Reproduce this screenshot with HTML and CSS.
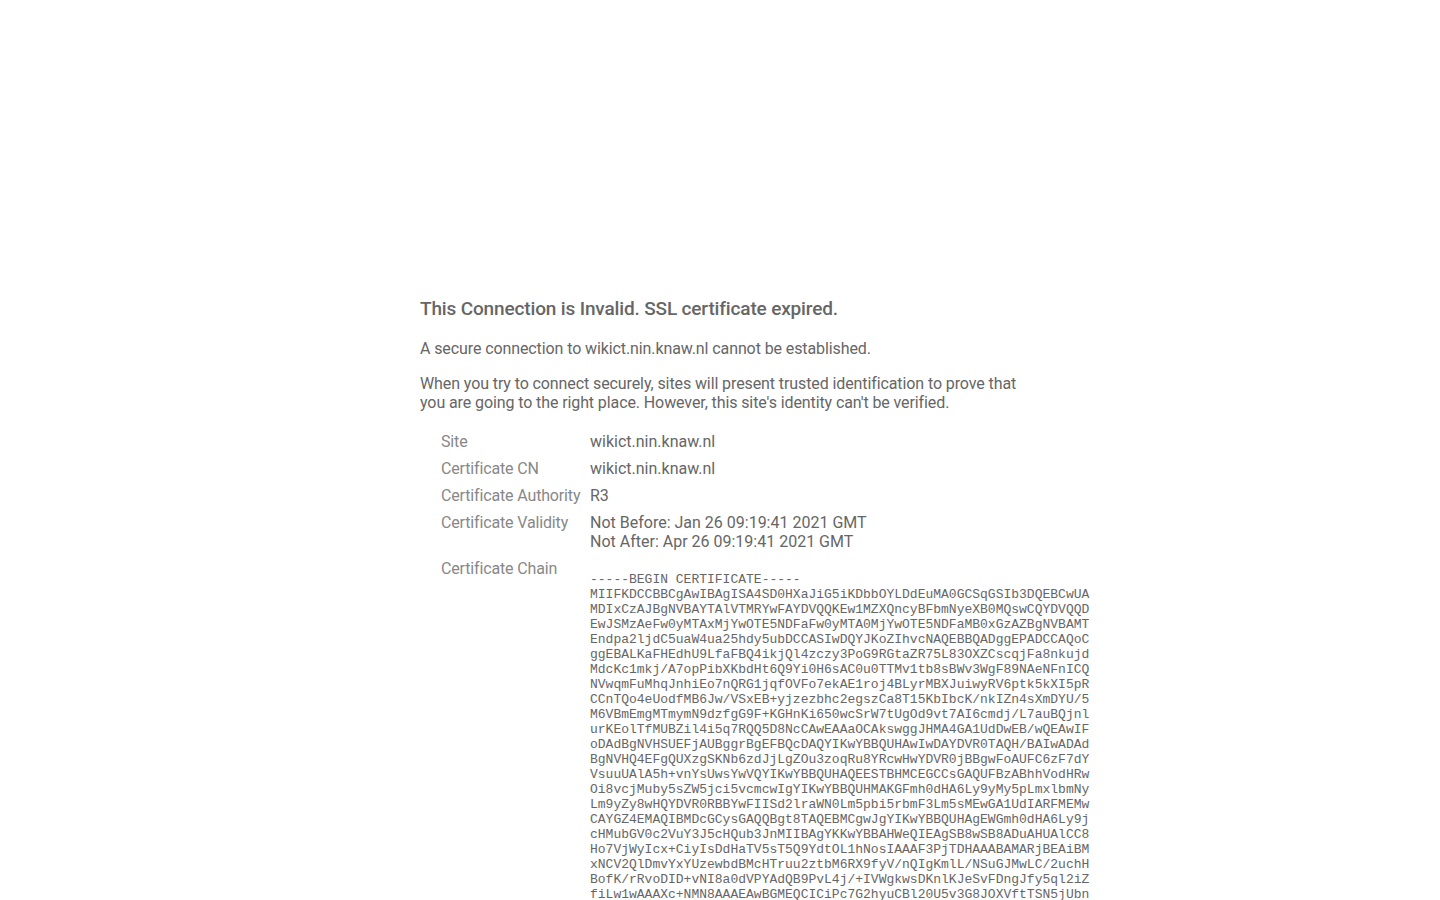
FILE: index.html
```html
<!DOCTYPE html>
<html lang="en">
<head>
<meta charset="utf-8">
<title>SSL certificate expired</title>
<link rel="stylesheet" href="styles.css">
</head>
<body>
<main class="page">
  <h1 class="title">This Connection is Invalid. SSL certificate expired.</h1>
  <p class="lead">A secure connection to wikict.nin.knaw.nl cannot be established.</p>
  <p class="text">When you try to connect securely, sites will present trusted identification to prove that you are going to the right place. However, this site's identity can't be verified.</p>
  <div class="info">
    <div class="label">Site</div>
    <div class="value">wikict.nin.knaw.nl</div>
    <div class="label">Certificate CN</div>
    <div class="value">wikict.nin.knaw.nl</div>
    <div class="label">Certificate Authority</div>
    <div class="value">R3</div>
    <div class="label">Certificate Validity</div>
    <div class="value">Not Before: Jan 26 09:19:41 2021 GMT<br>Not After: Apr 26 09:19:41 2021 GMT</div>
    <div class="label">Certificate Chain</div>
    <div class="value"><pre class="chain">-----BEGIN CERTIFICATE-----
MIIFKDCCBBCgAwIBAgISA4SD0HXaJiG5iKDbbOYLDdEuMA0GCSqGSIb3DQEBCwUA
MDIxCzAJBgNVBAYTAlVTMRYwFAYDVQQKEw1MZXQncyBFbmNyeXB0MQswCQYDVQQD
EwJSMzAeFw0yMTAxMjYwOTE5NDFaFw0yMTA0MjYwOTE5NDFaMB0xGzAZBgNVBAMT
Endpa2ljdC5uaW4ua25hdy5ubDCCASIwDQYJKoZIhvcNAQEBBQADggEPADCCAQoC
ggEBALKaFHEdhU9LfaFBQ4ikjQl4zczy3PoG9RGtaZR75L83OXZCscqjFa8nkujd
MdcKc1mkj/A7opPibXKbdHt6Q9Yi0H6sAC0u0TTMv1tb8sBWv3WgF89NAeNFnICQ
NVwqmFuMhqJnhiEo7nQRG1jqfOVFo7ekAE1roj4BLyrMBXJuiwyRV6ptk5kXI5pR
CCnTQo4eUodfMB6Jw/VSxEB+yjzezbhc2egszCa8T15KbIbcK/nkIZn4sXmDYU/5
M6VBmEmgMTmymN9dzfgG9F+KGHnKi650wcSrW7tUgOd9vt7AI6cmdj/L7auBQjnl
urKEolTfMUBZil4i5q7RQQ5D8NcCAwEAAaOCAkswggJHMA4GA1UdDwEB/wQEAwIF
oDAdBgNVHSUEFjAUBggrBgEFBQcDAQYIKwYBBQUHAwIwDAYDVR0TAQH/BAIwADAd
BgNVHQ4EFgQUXzgSKNb6zdJjLgZOu3zoqRu8YRcwHwYDVR0jBBgwFoAUFC6zF7dY
VsuuUAlA5h+vnYsUwsYwVQYIKwYBBQUHAQEESTBHMCEGCCsGAQUFBzABhhVodHRw
Oi8vcjMuby5sZW5jci5vcmcwIgYIKwYBBQUHMAKGFmh0dHA6Ly9yMy5pLmxlbmNy
Lm9yZy8wHQYDVR0RBBYwFIISd2lraWN0Lm5pbi5rbmF3Lm5sMEwGA1UdIARFMEMw
CAYGZ4EMAQIBMDcGCysGAQQBgt8TAQEBMCgwJgYIKwYBBQUHAgEWGmh0dHA6Ly9j
cHMubGV0c2VuY3J5cHQub3JnMIIBAgYKKwYBBAHWeQIEAgSB8wSB8ADuAHUAlCC8
Ho7VjWyIcx+CiyIsDdHaTV5sT5Q9YdtOL1hNosIAAAF3PjTDHAAABAMARjBEAiBM
xNCV2QlDmvYxYUzewbdBMcHTruu2ztbM6RX9fyV/nQIgKmlL/NSuGJMwLC/2uchH
BofK/rRvoDID+vNI8a0dVPYAdQB9PvL4j/+IVWgkwsDKnlKJeSvFDngJfy5ql2iZ
fiLw1wAAAXc+NMN8AAAEAwBGMEQCICiPc7G2hyuCBl20U5v3G8JOXVftTSN5jUbn</pre></div>
  </div>
</main>
</body>
</html>
```

FILE: styles.css
```css
html, body {
  margin: 0;
  padding: 0;
  background: #ffffff;
}

body {
  font-family: Roboto, "Liberation Sans", Arial, sans-serif;
  color: #666666;
}

.page {
  width: 600px;
  margin: 0 auto;
  padding-top: 297px;
}

.title {
  margin: 0;
  font-size: 19px;
  line-height: 24px;
  font-weight: 500;
  color: #666666;
  letter-spacing: -0.15px;
}

.lead {
  margin: 18px 0 0;
  font-size: 16px;
  line-height: 19px;
  letter-spacing: -0.1px;
}

.text {
  margin: 16px 0 0;
  font-size: 16px;
  line-height: 19px;
  letter-spacing: -0.1px;
}

.info {
  display: grid;
  grid-template-columns: 149px 1fr;
  row-gap: 8px;
  margin: 20px 0 0 21px;
  font-size: 16px;
  line-height: 19px;
}

.label {
  color: #888888;
  white-space: nowrap;
  letter-spacing: -0.15px;
}

.value {
  color: #666666;
  letter-spacing: 0;
}

.chain {
  margin: 13px 0 0;
  font-family: "Liberation Mono", "Courier New", monospace;
  font-size: 13px;
  line-height: 15px;
  letter-spacing: 0;
  color: #666666;
}
```
